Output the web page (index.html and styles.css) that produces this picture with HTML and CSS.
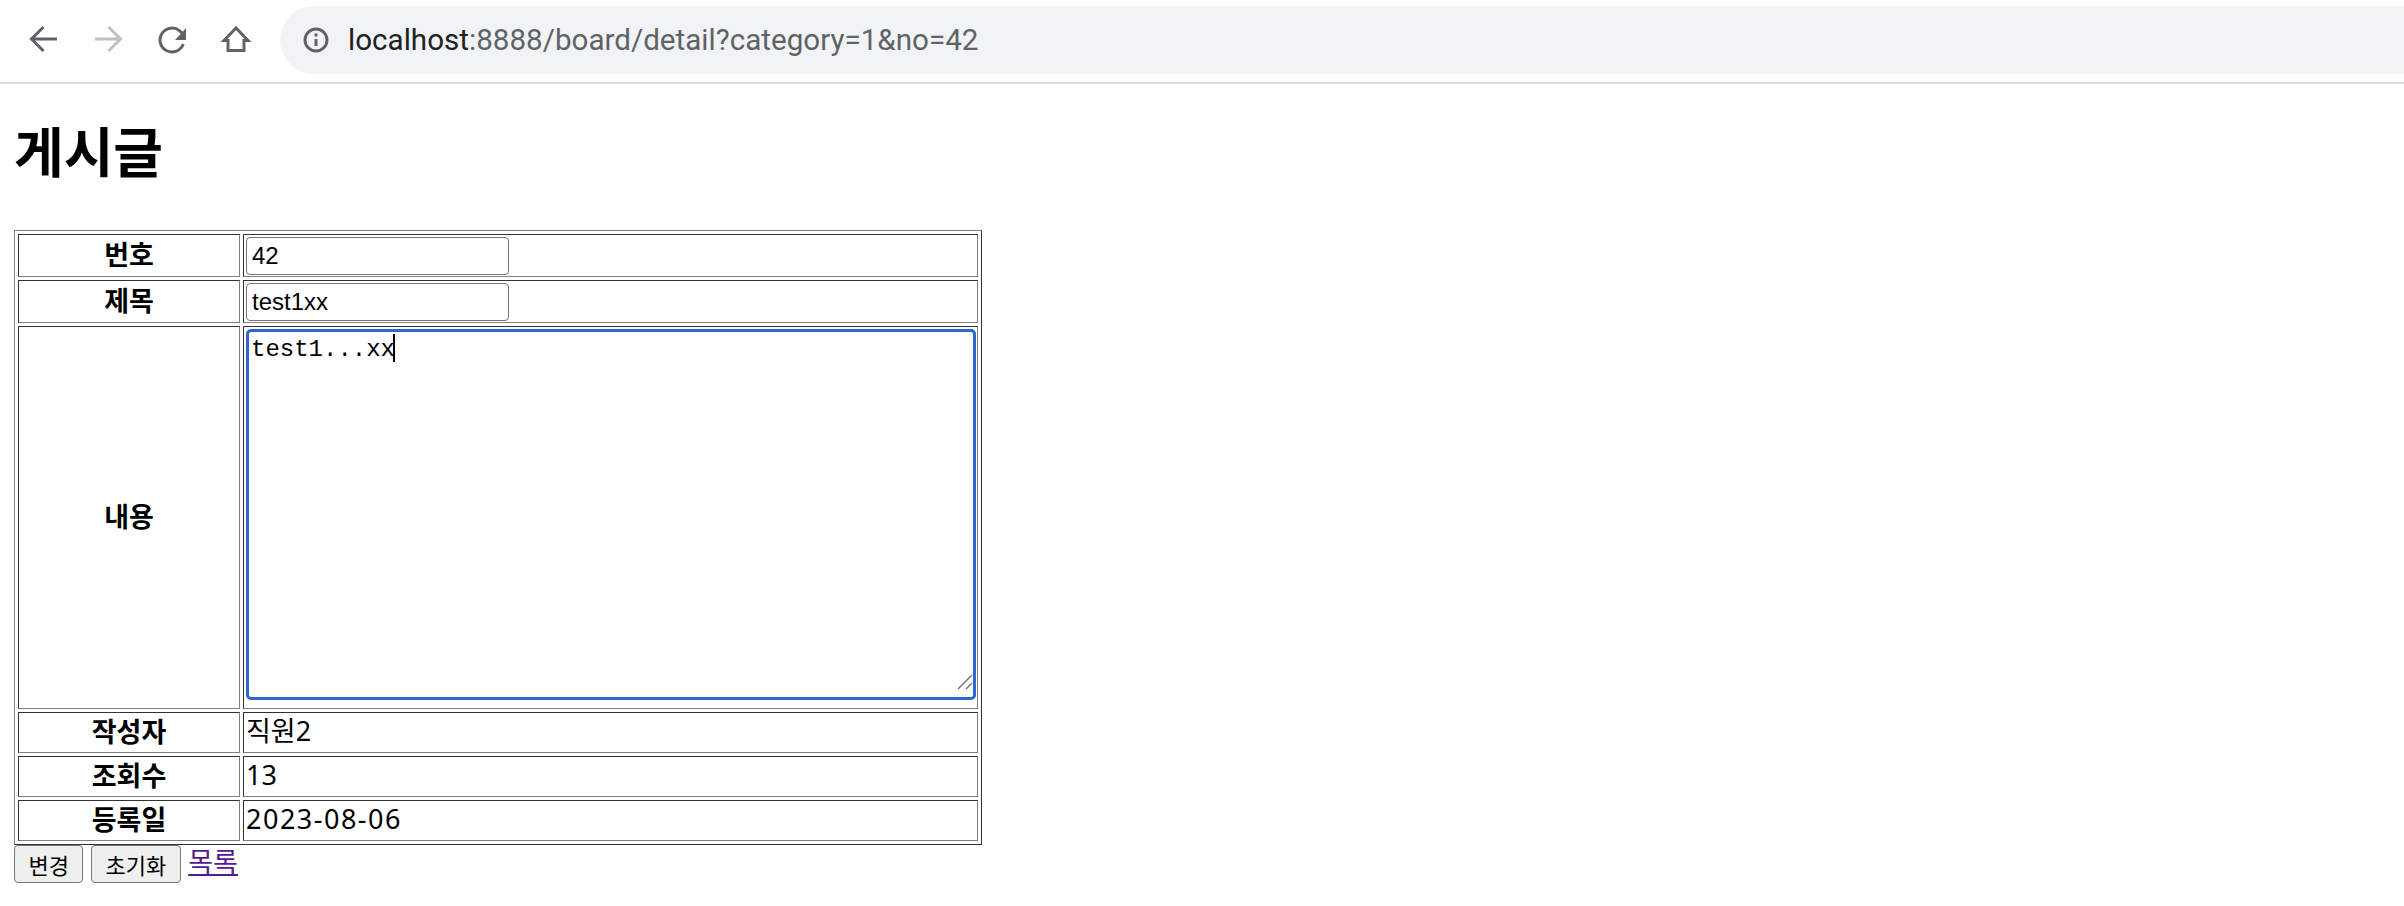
FILE: index.html
```html
<!DOCTYPE html>
<html lang="ko">

<head>
  <meta charset="utf-8" />
  <title>게시글</title>
  <link rel="stylesheet" href="styles.css">
</head>

<body>
  <div class="toolbar">
    <span class="nav">
      <svg width="40" height="40" viewBox="0 1 40 40" class="icon">
        <path d="M33 20H8M19.500 8L7.500 20l12 12" />
      </svg>
    </span>
    <span class="nav">
      <svg width="40" height="40" viewBox="0 1 40 40" class="icon off">
        <path d="M7 20h25M20.500 8l12 12-12 12" />
      </svg>
    </span>
    <span class="nav">
      <svg width="40" height="40" viewBox="0 1 40 40" class="icon">
        <path d="M31.300 25.100A12 12 0 1 1 27.700 11.800L31 15" />
        <path class="fill" d="M34 9v12H23z" />
      </svg>
    </span>
    <span class="nav">
      <svg width="40" height="40" viewBox="0 1 40 40" class="icon">
        <path d="M20 9L8 21.500h4V31.500h16V21.500h4z" />
      </svg>
    </span>
    <div class="omnibox">
      <svg width="28" height="28" viewBox="0 0 28 28" class="info">
        <circle cx="14" cy="14" r="11" />
        <path d="M14 13v7" />
        <path d="M14 7.500v3" />
      </svg>
      <span class="url"><span class="host">localhost</span>:8888/board/detail?category=1&amp;no=42</span>
    </div>
  </div>

  <div class="page">
    <h1>게시글</h1>
    <form>
      <table class="detail">
        <tr>
          <th>번호</th>
          <td><input type="text" value="42"></td>
        </tr>
        <tr>
          <th>제목</th>
          <td><input type="text" value="test1xx"></td>
        </tr>
        <tr>
          <th>내용</th>
          <td>
            <div class="editor">
              <textarea>test1...xx</textarea>
              <span class="caret"></span>
              <svg class="grip" width="16" height="16" viewBox="0 0 16 16">
                <path d="M1 15L15 1M9 15l6-6" />
              </svg>
            </div>
          </td>
        </tr>
        <tr>
          <th>작성자</th>
          <td class="value">직원2</td>
        </tr>
        <tr>
          <th>조회수</th>
          <td class="value">13</td>
        </tr>
        <tr>
          <th>등록일</th>
          <td class="value date">2023-08-06</td>
        </tr>
      </table>
      <div class="actions">
        <button type="submit">변경</button>
        <button type="reset">초기화</button>
        <a href="#">목록</a>
      </div>
    </form>
  </div>
</body>

</html>
```

FILE: styles.css
```css
body {
  font-family: "Noto Sans", "Noto Sans CJK KR", sans-serif;
  font-size: 27px;
  color: #000;
  background-color: #fff;
  overflow: hidden;
  padding: 0;
  margin: 0;
}

.toolbar {
  display: flex;
  align-items: center;
  box-sizing: border-box;
  height: 84px;
  padding: 0 0 2px 12px;
  border-bottom: 2px solid #dadce0;
}

.nav {
  display: flex;
  align-items: center;
  justify-content: center;
  width: 64px;
  height: 64px;
}

.icon path {
  fill: none;
  stroke: #5f6368;
  stroke-width: 3;
}

.icon path.fill {
  fill: #5f6368;
  stroke: none;
}

.icon.off path {
  stroke: #bdc1c6;
}

.omnibox {
  display: flex;
  align-items: center;
  flex: 1;
  height: 68px;
  margin-left: 12px;
  padding-left: 22px;
  border-radius: 34px 0 0 34px;
  background: #f1f3f4;
}

.info {
  margin-right: 18px;
}

.info circle,
.info path {
  fill: none;
  stroke: #5f6368;
  stroke-width: 3;
}

.url {
  font-family: Roboto, sans-serif;
  font-size: 29.600px;
  color: #5f6368;
}

.host {
  color: #202124;
}

.page {
  padding: 0 14px;
}

h1 {
  font-family: "Noto Sans CJK KR", sans-serif;
  font-size: 54px;
  line-height: 70px;
  margin: 31px 0 45px;
}

.detail {
  table-layout: fixed;
  width: 968px;
  border: 1px solid;
  border-color: #808080 #333 #333 #808080;
  border-spacing: 3px;
}

.detail th,
.detail td {
  border: 1px solid;
  border-color: #333 #808080 #808080 #333;
}

.detail th {
  width: 220px;
  padding: 0 0 5px;
  line-height: 31px;
  text-align: center;
  font-family: "Noto Sans CJK KR", sans-serif;
}

.detail td {
  padding: 2px 1px 1px 2px;
  line-height: 36px;
  text-align: left;
}

.detail td.value {
  padding: 0 1px 3px 2px;
}

.detail td.date {
  letter-spacing: 1.500px;
}

input {
  display: block;
  box-sizing: border-box;
  width: 263px;
  height: 38px;
  padding: 1px 5px;
  border: 1px solid #767676;
  border-radius: 4px;
  font-family: "Liberation Sans", sans-serif;
  font-size: 24px;
}

.editor {
  position: relative;
}

textarea {
  display: block;
  box-sizing: border-box;
  width: 100%;
  height: 371px;
  margin-bottom: 7px;
  padding: 4px 2px;
  border: 3px solid #2f66d0;
  border-radius: 5px;
  outline: none;
  resize: none;
  font-family: "Liberation Mono", monospace;
  font-size: 24px;
  line-height: 27px;
}

.caret {
  position: absolute;
  left: 147px;
  top: 5px;
  width: 2px;
  height: 28px;
  background: #000;
}

.grip {
  position: absolute;
  right: 3px;
  bottom: 10px;
}

.grip path {
  fill: none;
  stroke: #777;
  stroke-width: 1.500;
}

.actions {
  display: flex;
  align-items: flex-start;
  gap: 7.500px;
}

button {
  box-sizing: border-box;
  height: 38px;
  margin: 0;
  padding: 0 13.500px;
  border: 1px solid #767676;
  border-radius: 4px;
  background: #efefef;
  font-family: "Noto Sans CJK KR", sans-serif;
  font-size: 22px;
  color: #000;
}

a {
  font-family: "Noto Sans CJK KR", sans-serif;
  line-height: 32px;
  color: #551a8b;
}
```
